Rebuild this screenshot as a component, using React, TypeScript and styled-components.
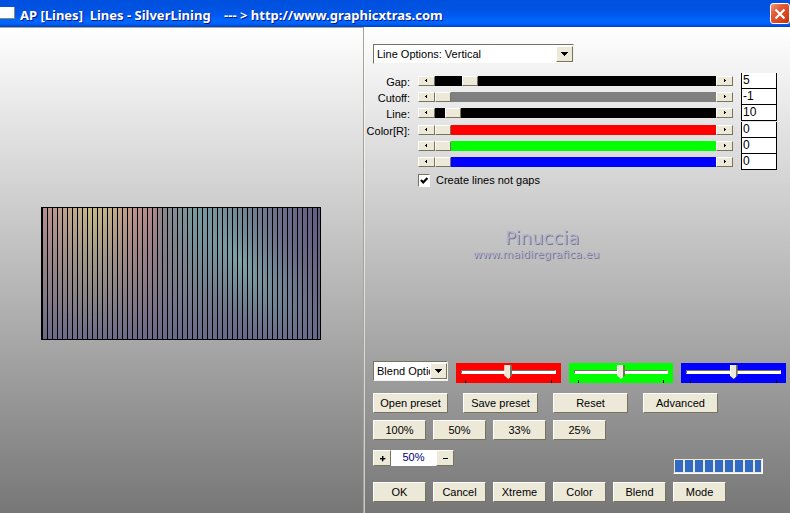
import React, { useState } from "react";
import styled, { createGlobalStyle } from "styled-components";

const GlobalStyle = createGlobalStyle`
  *, *::before, *::after { box-sizing: border-box; }
  body {
    margin: 0;
    font-family: "Liberation Sans", Arial, sans-serif;
    font-size: 11px;
    line-height: 14px;
    color: #000;
  }
  button, input, select { font: inherit; color: inherit; margin: 0; }
`;

const Dialog = styled.div`
  display: flex;
  flex-direction: column;
  min-height: 100vh;
`;

const TitleBar = styled.header`
  display: flex;
  align-items: center;
  height: 27px;
  background: linear-gradient(#0050e0 0, #0052e0 30%, #0058ee 55%, #0066ff 75%, #0062fa 88%, #0040c4 100%);
`;

const WindowIcon = styled.span`
  width: 15px;
  height: 12px;
  margin-bottom: 2px;
  background: #fff;
  border-right: 1px solid #8a8a70;
  border-bottom: 1px solid #8a8a70;
`;

const Title = styled.h1`
  flex: 1;
  margin: 2px 0 0 5px;
  font-family: "Noto Sans", sans-serif;
  font-size: 13px;
  font-weight: 700;
  line-height: 18px;
  color: #fff;
  text-shadow: 1px 1px 0 #0a1883;
  white-space: pre;
`;

const CloseButton = styled.button`
  display: flex;
  align-items: center;
  justify-content: center;
  width: 20px;
  height: 21px;
  padding: 0;
  border: 1px solid #fff;
  border-radius: 3px;
  background: linear-gradient(135deg, #f09a80 0, #e35a38 35%, #d8401a 75%, #b83010 100%);
`;

const Body = styled.main`
  flex: 1;
  display: grid;
  grid-template-columns: 363fr 427fr;
  background: linear-gradient(#ffffff, #777777);
`;

const PreviewPane = styled.section`
  display: flex;
  align-items: center;
  padding: 5px 42px 0 41px;
  border-top: 1px solid #aca899;
  svg { display: block; width: 100%; height: auto; }
`;

const ControlPane = styled.section`
  display: flex;
  flex-direction: column;
  padding: 17px 4px 11px 9px;
  border-left: 1px solid #a5a298;
  box-shadow: inset 1px 0 0 rgba(255, 255, 255, 0.6);
`;

const SelectBox = styled.div<{ $width: number }>`
  position: relative;
  width: ${(p) => p.$width}px;
  height: 20px;
  border: 1px solid;
  border-color: #777363 #f4f4ee #f4f4ee #777363;
  background: #fff;
`;

const NativeSelect = styled.select`
  appearance: none;
  display: block;
  width: 100%;
  height: 18px;
  padding: 0 17px 0 3px;
  border: 0;
  border-radius: 0;
  background: transparent;
  overflow: hidden;
  text-overflow: clip;
`;

const SelectArrow = styled.span`
  position: absolute;
  top: 1px;
  right: 0;
  display: flex;
  align-items: center;
  justify-content: center;
  width: 17px;
  height: 16px;
  border: 1px solid;
  border-color: #fff #77735f #77735f #fff;
  background: #ece9d8;
  pointer-events: none;
`;

const ScrollGroups = styled.div`
  display: flex;
  flex-direction: column;
  gap: 1px;
  margin: 9px 9px 0 0;
`;

const ScrollRow = styled.div`
  display: grid;
  grid-template-columns: 37px 1fr 36px;
  column-gap: 8px;
  align-items: center;
  height: 16px;
`;

const RowLabel = styled.label`
  justify-self: end;
  padding-top: 2px;
  white-space: nowrap;
`;

const ScrollBar = styled.div`
  display: flex;
  height: 10px;
`;

const ArrowButton = styled.button`
  display: flex;
  align-items: center;
  justify-content: center;
  width: 17px;
  height: 10px;
  padding: 0;
  border: 1px solid;
  border-color: #fff #77735f #77735f #fff;
  background: #ece9d8;
`;

const ScrollRange = styled.input<{ $color: string }>`
  appearance: none;
  flex: 1;
  min-width: 0;
  height: 10px;
  background: ${(p) => p.$color};
  &::-webkit-slider-thumb {
    appearance: none;
    width: 16px;
    height: 10px;
    border: 1px solid;
    border-color: #fff #77735f #77735f #fff;
    border-radius: 0;
    background: #ece9d8;
  }
`;

const ValueInput = styled.input`
  width: 36px;
  height: 16px;
  padding: 0 1px 2px;
  border: 1px solid #000;
  border-top: 0;
  border-radius: 0;
  background: #fff;
  font-size: 12px;
`;

const CheckRow = styled.label`
  display: flex;
  align-items: center;
  gap: 6px;
  margin: 3px 0 0 45px;
`;

const CheckBox = styled.input`
  appearance: none;
  width: 12px;
  height: 13px;
  border: 1px solid;
  border-color: #77735f #fff #fff #77735f;
  background: #fff;
  &:checked {
    background: #fff url("data:image/svg+xml,%3Csvg xmlns='http://www.w3.org/2000/svg' viewBox='0 0 10 11'%3E%3Cpath d='M2 5l2.2 2.4L8.4 3' fill='none' stroke='%23000' stroke-width='2.2'/%3E%3C/svg%3E") center / 10px 11px no-repeat;
  }
`;

const Credit = styled.div`
  align-self: flex-start;
  margin: 41px 0 0 100px;
  color: #b4b4cc;
  text-align: center;
  text-shadow: 1px 1px 0 #74748c;
  font-family: "DejaVu Sans", sans-serif;
`;

const CreditName = styled.p`
  margin: 0;
  padding-left: 12px;
  font-size: 18px;
  line-height: 20px;
`;

const CreditSite = styled.p`
  margin: 0;
  font-size: 11px;
  line-height: 14px;
`;

const BottomControls = styled.div`
  display: flex;
  flex-direction: column;
  margin-top: auto;
`;

const BlendRow = styled.div`
  display: flex;
  align-items: flex-start;
  gap: 8px;
  margin-bottom: 10px;
`;

const ColorSlider = styled.label<{ $color: string }>`
  flex: 1;
  min-width: 0;
  display: flex;
  flex-direction: column;
  height: 20px;
  margin-top: 2px;
  padding: 1px 5px 0;
  background: ${(p) => p.$color};
`;

const ColorRange = styled.input`
  appearance: none;
  display: block;
  width: 100%;
  height: 16px;
  background: transparent;
  &::-webkit-slider-runnable-track {
    height: 4px;
    border: 1px solid;
    border-color: #77735f #fff #fff #77735f;
    background: #fff;
  }
  &::-webkit-slider-thumb {
    appearance: none;
    width: 8px;
    height: 14px;
    margin-top: -6px;
    border: 0;
    border-radius: 0;
    background: linear-gradient(90deg, #fff 1px, #ece9d8 1px, #ece9d8 6px, #77735f 6px);
    clip-path: polygon(0 0, 100% 0, 100% 75%, 50% 100%, 0 75%);
  }
`;

const Ticks = styled.span`
  display: block;
  height: 3px;
  margin: 0 4px;
  border: solid #000;
  border-width: 0 1px;
`;

const ButtonRow = styled.div<{ $gap: number; $after: number }>`
  display: flex;
  gap: ${(p) => p.$gap}px;
  margin-bottom: ${(p) => p.$after}px;
`;

const PushButton = styled.button<{ $wide?: boolean }>`
  width: ${(p) => (p.$wide ? 75 : 53)}px;
  height: 20px;
  padding: 0;
  border: 1px solid;
  border-color: #fff #77735f #77735f #fff;
  background: #ece9d8;
  white-space: nowrap;
`;

const StatusRow = styled.div`
  display: flex;
  justify-content: space-between;
  align-items: flex-start;
  margin: 0 23px 8px 0;
`;

const Zoom = styled.div`
  display: flex;
  height: 16px;
`;

const ZoomButton = styled(PushButton)`
  display: flex;
  align-items: center;
  justify-content: center;
  width: 18px;
  height: 16px;
`;

const ZoomValue = styled.output`
  width: 45px;
  background: #fff;
  color: #000080;
  text-align: center;
`;

const Progress = styled.div`
  display: flex;
  gap: 2px;
  width: 90px;
  height: 16px;
  margin-top: 8px;
  padding: 1px;
  border: 1px solid;
  border-color: #8a8778 #fff #fff #8a8778;
  background: #ece9d8;
`;

const ProgressBlock = styled.span`
  flex: 0 0 8px;
  background: #316ac5;
  &:last-child { flex: 0 0 6px; }
`;

function Preview() {
  return (
    <svg viewBox="0 0 280 133" role="img" aria-label="Vertical lines preview">
      <defs>
        <linearGradient id="sheen" x1="0" x2="1">
          <stop offset="0" stopColor="#b48c8e" />
          <stop offset="0.07" stopColor="#c0a08a" />
          <stop offset="0.18" stopColor="#c8bb88" />
          <stop offset="0.25" stopColor="#c5af88" />
          <stop offset="0.33" stopColor="#c09688" />
          <stop offset="0.39" stopColor="#b58a8c" />
          <stop offset="0.44" stopColor="#8d888c" />
          <stop offset="0.56" stopColor="#80a09e" />
          <stop offset="0.7" stopColor="#748890" />
          <stop offset="0.86" stopColor="#6c6e8a" />
          <stop offset="1" stopColor="#625e82" />
        </linearGradient>
        <linearGradient id="dusk" x1="0" x2="0" y1="0" y2="1">
          <stop offset="0" stopColor="#666688" stopOpacity="0" />
          <stop offset="0.5" stopColor="#707084" stopOpacity="0.55" />
          <stop offset="1" stopColor="#666688" stopOpacity="0.95" />
        </linearGradient>
        <radialGradient
          id="teal"
          gradientUnits="userSpaceOnUse"
          cx="0"
          cy="0"
          r="1"
          gradientTransform="translate(200 54) rotate(50) scale(120 52)"
        >
          <stop offset="0" stopColor="#80a8aa" stopOpacity="0.9" />
          <stop offset="0.5" stopColor="#7494a0" stopOpacity="0.5" />
          <stop offset="1" stopColor="#6a7f90" stopOpacity="0" />
        </radialGradient>
      </defs>
      <rect width="280" height="133" fill="url(#sheen)" />
      <rect width="280" height="133" fill="url(#dusk)" />
      <rect width="280" height="133" fill="url(#teal)" />
      <g fill="#000" shapeRendering="crispEdges">
        {Array.from({ length: 56 }, (_, i) => (
          <rect key={i} x={1 + i * 5} y="0" width="1" height="133" />
        ))}
        <path d="M0 0h280v133H0zM1 1v131h278V1z" fillRule="evenodd" />
      </g>
    </svg>
  );
}

function DownArrow() {
  return (
    <svg width="7" height="4" viewBox="0 0 7 4" shapeRendering="crispEdges" aria-hidden="true">
      <path d="M0 0h7v1H6v1H5v1H4v1H3V3H2V2H1V1H0z" />
    </svg>
  );
}

function SideArrow({ right }: { right?: boolean }) {
  return (
    <svg width="3" height="4" viewBox="0 0 3 4" shapeRendering="crispEdges" aria-hidden="true">
      <path d={right ? "M1 0h1v1h1v1H2v1H1z" : "M2 0H1v1H0v1h1v1h1z"} />
    </svg>
  );
}

interface Scroll {
  id: string;
  label: string;
  name: string;
  color: string;
  min: number;
  max: number;
  value: number;
}

const scrollGroups: Scroll[][] = [
  [
    { id: "gap", label: "Gap:", name: "Gap", color: "#000", min: 0, max: 50, value: 5 },
    { id: "cutoff", label: "Cutoff:", name: "Cutoff", color: "#808080", min: -1, max: 255, value: -1 },
    { id: "line", label: "Line:", name: "Line", color: "#000", min: 0, max: 255, value: 10 },
  ],
  [
    { id: "red", label: "Color[R]:", name: "Red", color: "#f00", min: 0, max: 255, value: 0 },
    { id: "green", label: "", name: "Green", color: "#0f0", min: 0, max: 255, value: 0 },
    { id: "blue", label: "", name: "Blue", color: "#00f", min: 0, max: 255, value: 0 },
  ],
];

function ScrollControl({ id, label, name, color, min, max, value: initial }: Scroll) {
  const [value, setValue] = useState(initial);
  const update = (next: number) => setValue(Math.max(min, Math.min(max, next || 0)));
  return (
    <ScrollRow>
      <RowLabel htmlFor={id}>{label}</RowLabel>
      <ScrollBar>
        <ArrowButton aria-label={`Decrease ${name}`} onClick={() => update(value - 1)}>
          <SideArrow />
        </ArrowButton>
        <ScrollRange
          type="range"
          id={id}
          aria-label={name}
          $color={color}
          min={min}
          max={max}
          value={value}
          onChange={(e) => update(Number(e.target.value))}
        />
        <ArrowButton aria-label={`Increase ${name}`} onClick={() => update(value + 1)}>
          <SideArrow right />
        </ArrowButton>
      </ScrollBar>
      <ValueInput
        type="text"
        aria-label={`${name} value`}
        value={value}
        onChange={(e) => update(Number(e.target.value))}
      />
    </ScrollRow>
  );
}

const blendColors = [
  { name: "Red blend", color: "#f00" },
  { name: "Green blend", color: "#0f0" },
  { name: "Blue blend", color: "#00f" },
];

export default function App() {
  return (
    <>
      <GlobalStyle />
      <Dialog>
        <TitleBar>
          <WindowIcon />
          <Title>{"AP [Lines]  Lines - SilverLining    --- > http://www.graphicxtras.com"}</Title>
          <CloseButton aria-label="Close">
            <svg width="12" height="12" viewBox="0 0 12 12" aria-hidden="true">
              <path d="M1.5 1.5l9 9M10.5 1.5l-9 9" stroke="#fff" strokeWidth="2.2" />
            </svg>
          </CloseButton>
        </TitleBar>
        <Body>
          <PreviewPane>
            <Preview />
          </PreviewPane>
          <ControlPane>
            <SelectBox $width={201}>
              <NativeSelect aria-label="Line options">
                <option>Line Options: Vertical</option>
              </NativeSelect>
              <SelectArrow>
                <DownArrow />
              </SelectArrow>
            </SelectBox>
            <ScrollGroups>
              {scrollGroups.map((group, i) => (
                <div key={i}>
                  {group.map((s) => (
                    <ScrollControl key={s.id} {...s} />
                  ))}
                </div>
              ))}
            </ScrollGroups>
            <CheckRow>
              <CheckBox type="checkbox" defaultChecked />
              Create lines not gaps
            </CheckRow>
            <Credit>
              <CreditName>Pinuccia</CreditName>
              <CreditSite>www.maidiregrafica.eu</CreditSite>
            </Credit>
            <BottomControls>
              <BlendRow>
                <SelectBox $width={75}>
                  <NativeSelect aria-label="Blend options">
                    <option>Blend Options</option>
                  </NativeSelect>
                  <SelectArrow>
                    <DownArrow />
                  </SelectArrow>
                </SelectBox>
                {blendColors.map((b) => (
                  <ColorSlider key={b.name} $color={b.color}>
                    <ColorRange type="range" aria-label={b.name} defaultValue={50} />
                    <Ticks />
                  </ColorSlider>
                ))}
              </BlendRow>
              <ButtonRow $gap={15} $after={7}>
                {["Open preset", "Save preset", "Reset", "Advanced"].map((t) => (
                  <PushButton key={t} $wide>
                    {t}
                  </PushButton>
                ))}
              </ButtonRow>
              <ButtonRow $gap={7} $after={10}>
                {["100%", "50%", "33%", "25%"].map((t) => (
                  <PushButton key={t}>{t}</PushButton>
                ))}
              </ButtonRow>
              <StatusRow>
                <Zoom>
                  <ZoomButton aria-label="Zoom in">
                    <svg width="7" height="7" viewBox="0 0 7 7" shapeRendering="crispEdges">
                      <path d="M3 1h1v2h2v1H4v2H3V4H1V3h2z" stroke="#000" strokeWidth="0.4" />
                    </svg>
                  </ZoomButton>
                  <ZoomValue>50%</ZoomValue>
                  <ZoomButton aria-label="Zoom out">
                    <svg width="7" height="7" viewBox="0 0 7 7" shapeRendering="crispEdges">
                      <path d="M1 3h5v1H1z" />
                    </svg>
                  </ZoomButton>
                </Zoom>
                <Progress role="progressbar" aria-label="Progress" aria-valuenow={100}>
                  {Array.from({ length: 9 }, (_, i) => (
                    <ProgressBlock key={i} />
                  ))}
                </Progress>
              </StatusRow>
              <ButtonRow $gap={7} $after={0}>
                {["OK", "Cancel", "Xtreme", "Color", "Blend", "Mode"].map((t) => (
                  <PushButton key={t}>{t}</PushButton>
                ))}
              </ButtonRow>
            </BottomControls>
          </ControlPane>
        </Body>
      </Dialog>
    </>
  );
}
